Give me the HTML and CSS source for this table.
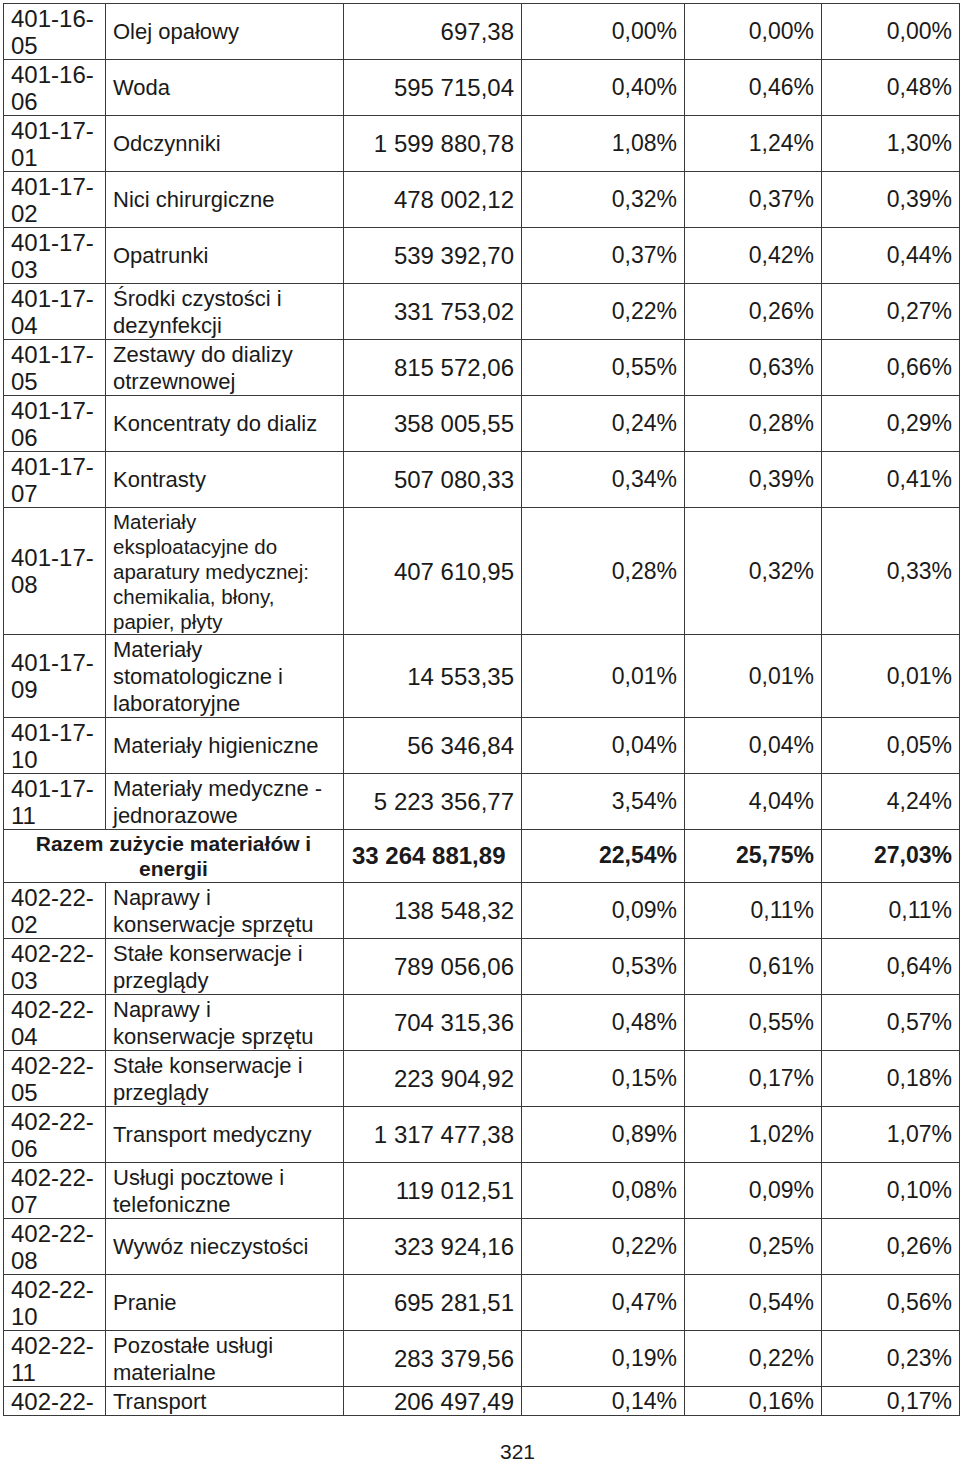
FILE: index.html
```html
<!DOCTYPE html>
<html lang="pl">
<head>
<meta charset="utf-8">
<title>Zużycie materiałów</title>
<link rel="stylesheet" href="styles.css">
</head>
<body>
<table class="costs">
  <colgroup>
    <col class="c-code"><col class="c-desc"><col class="c-amt"><col class="c-p1"><col class="c-p2"><col class="c-p3">
  </colgroup>
  <tbody>
    <tr><td class="code">401-16-<br>05</td><td class="desc">Olej opałowy</td><td class="amt">697,38</td><td class="pct">0,00%</td><td class="pct">0,00%</td><td class="pct">0,00%</td></tr>
    <tr><td class="code">401-16-<br>06</td><td class="desc">Woda</td><td class="amt">595 715,04</td><td class="pct">0,40%</td><td class="pct">0,46%</td><td class="pct">0,48%</td></tr>
    <tr><td class="code">401-17-<br>01</td><td class="desc">Odczynniki</td><td class="amt">1 599 880,78</td><td class="pct">1,08%</td><td class="pct">1,24%</td><td class="pct">1,30%</td></tr>
    <tr><td class="code">401-17-<br>02</td><td class="desc">Nici chirurgiczne</td><td class="amt">478 002,12</td><td class="pct">0,32%</td><td class="pct">0,37%</td><td class="pct">0,39%</td></tr>
    <tr><td class="code">401-17-<br>03</td><td class="desc">Opatrunki</td><td class="amt">539 392,70</td><td class="pct">0,37%</td><td class="pct">0,42%</td><td class="pct">0,44%</td></tr>
    <tr><td class="code">401-17-<br>04</td><td class="desc">Środki czystości i<br>dezynfekcji</td><td class="amt">331 753,02</td><td class="pct">0,22%</td><td class="pct">0,26%</td><td class="pct">0,27%</td></tr>
    <tr><td class="code">401-17-<br>05</td><td class="desc">Zestawy do dializy<br>otrzewnowej</td><td class="amt">815 572,06</td><td class="pct">0,55%</td><td class="pct">0,63%</td><td class="pct">0,66%</td></tr>
    <tr><td class="code">401-17-<br>06</td><td class="desc">Koncentraty do dializ</td><td class="amt">358 005,55</td><td class="pct">0,24%</td><td class="pct">0,28%</td><td class="pct">0,29%</td></tr>
    <tr><td class="code">401-17-<br>07</td><td class="desc">Kontrasty</td><td class="amt">507 080,33</td><td class="pct">0,34%</td><td class="pct">0,39%</td><td class="pct">0,41%</td></tr>
    <tr><td class="code">401-17-<br>08</td><td class="desc small">Materiały<br>eksploatacyjne do<br>aparatury medycznej:<br>chemikalia, błony,<br>papier, płyty</td><td class="amt">407 610,95</td><td class="pct">0,28%</td><td class="pct">0,32%</td><td class="pct">0,33%</td></tr>
    <tr><td class="code">401-17-<br>09</td><td class="desc">Materiały<br>stomatologiczne i<br>laboratoryjne</td><td class="amt">14 553,35</td><td class="pct">0,01%</td><td class="pct">0,01%</td><td class="pct">0,01%</td></tr>
    <tr><td class="code">401-17-<br>10</td><td class="desc">Materiały higieniczne</td><td class="amt">56 346,84</td><td class="pct">0,04%</td><td class="pct">0,04%</td><td class="pct">0,05%</td></tr>
    <tr><td class="code">401-17-<br>11</td><td class="desc">Materiały medyczne -<br>jednorazowe</td><td class="amt">5 223 356,77</td><td class="pct">3,54%</td><td class="pct">4,04%</td><td class="pct">4,24%</td></tr>
    <tr class="total"><td class="total-label" colspan="2">Razem zużycie materiałów i<br>energii</td><td class="amt total-amt">33 264 881,89</td><td class="pct">22,54%</td><td class="pct">25,75%</td><td class="pct">27,03%</td></tr>
    <tr><td class="code">402-22-<br>02</td><td class="desc">Naprawy i<br>konserwacje sprzętu</td><td class="amt">138 548,32</td><td class="pct">0,09%</td><td class="pct">0,11%</td><td class="pct">0,11%</td></tr>
    <tr><td class="code">402-22-<br>03</td><td class="desc">Stałe konserwacje i<br>przeglądy</td><td class="amt">789 056,06</td><td class="pct">0,53%</td><td class="pct">0,61%</td><td class="pct">0,64%</td></tr>
    <tr><td class="code">402-22-<br>04</td><td class="desc">Naprawy i<br>konserwacje sprzętu</td><td class="amt">704 315,36</td><td class="pct">0,48%</td><td class="pct">0,55%</td><td class="pct">0,57%</td></tr>
    <tr><td class="code">402-22-<br>05</td><td class="desc">Stałe konserwacje i<br>przeglądy</td><td class="amt">223 904,92</td><td class="pct">0,15%</td><td class="pct">0,17%</td><td class="pct">0,18%</td></tr>
    <tr><td class="code">402-22-<br>06</td><td class="desc">Transport medyczny</td><td class="amt">1 317 477,38</td><td class="pct">0,89%</td><td class="pct">1,02%</td><td class="pct">1,07%</td></tr>
    <tr><td class="code">402-22-<br>07</td><td class="desc">Usługi pocztowe i<br>telefoniczne</td><td class="amt">119 012,51</td><td class="pct">0,08%</td><td class="pct">0,09%</td><td class="pct">0,10%</td></tr>
    <tr><td class="code">402-22-<br>08</td><td class="desc">Wywóz nieczystości</td><td class="amt">323 924,16</td><td class="pct">0,22%</td><td class="pct">0,25%</td><td class="pct">0,26%</td></tr>
    <tr><td class="code">402-22-<br>10</td><td class="desc">Pranie</td><td class="amt">695 281,51</td><td class="pct">0,47%</td><td class="pct">0,54%</td><td class="pct">0,56%</td></tr>
    <tr><td class="code">402-22-<br>11</td><td class="desc">Pozostałe usługi<br>materialne</td><td class="amt">283 379,56</td><td class="pct">0,19%</td><td class="pct">0,22%</td><td class="pct">0,23%</td></tr>
    <tr><td class="code">402-22-</td><td class="desc">Transport</td><td class="amt">206 497,49</td><td class="pct">0,14%</td><td class="pct">0,16%</td><td class="pct">0,17%</td></tr>
  </tbody>
</table>
<div class="pagenum">321</div>
</body>
</html>
```

FILE: styles.css
```css
html, body {
  margin: 0;
  padding: 0;
  background: #ffffff;
}

body {
  font-family: "Liberation Sans", Arial, sans-serif;
  color: #1a1a1a;
}

.costs {
  margin: 3px 0 0 3px;
  width: 956px;
  table-layout: fixed;
  border-collapse: collapse;
  border: 1.5px solid #3a3a3a;
}

.c-code { width: 102px; }
.c-desc { width: 238px; }
.c-amt  { width: 178px; }
.c-p1   { width: 163px; }
.c-p2   { width: 137px; }
.c-p3   { width: 138px; }

.costs td {
  border: 1.5px solid #3a3a3a;
  padding: 0.5px 7px 0.5px 7px;
  line-height: 27px;
  font-size: 22px;
  vertical-align: middle;
  white-space: nowrap;
  overflow: hidden;
}

.costs td.code {
  font-size: 24px;
  padding-left: 7px;
  padding-right: 0;
}

.costs td.desc {
  padding-left: 7px;
  padding-right: 2px;
}

.costs td.desc.small {
  font-size: 20.5px;
  line-height: 25px;
}

.costs td.amt {
  font-size: 24px;
  text-align: right;
}

.costs td.pct {
  font-size: 23px;
  text-align: right;
}

.costs tr.total td {
  font-weight: bold;
  line-height: 25.5px;
}

.costs td.total-label {
  font-size: 21px;
  text-align: center;
}

.costs td.total-amt {
  text-align: left;
  padding-left: 8px;
}

.pagenum {
  margin-top: 24px;
  padding-left: 500px;
  font-size: 21px;
  line-height: 24px;
  color: #1a1a1a;
}
```
